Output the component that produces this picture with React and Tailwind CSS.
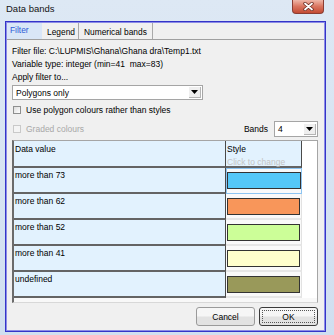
import React from "react";

function Arrow() {
  return (
    <svg width="7" height="4" viewBox="0 0 7 4">
      <path d="M0 0H7L3.5 4Z" fill="#000" />
    </svg>
  );
}

function Combo({ className, text }) {
  return (
    <div className={className}>
      <span className="flex-1 pl-[3px] text-[8.5px] leading-[10px] text-black">{text}</span>
      <div className="w-[12px] h-[11px] mr-[1px] bg-[#efefef] border-r border-b border-[#b5b5b5] flex items-center justify-center">
        <Arrow />
      </div>
    </div>
  );
}

const rows = [
  { label: "more than 73", color: "bg-[#55c8f8]", focus: true },
  { label: "more than 62", color: "bg-[#f8965a]" },
  { label: "more than 52", color: "bg-[#ccfe98]" },
  { label: "more than 41", color: "bg-[#ffffcc]" },
  { label: "undefined", color: "bg-[#99995a]" },
];

export default function App() {
  return (
    <div className="w-[334px] h-[335px] bg-linear-to-b from-[#dde8f4] to-[#d0dff0] flex flex-col font-['Liberation_Sans',Arial,sans-serif] text-black overflow-hidden">
      {/* title bar */}
      <div className="h-[21px] shrink-0 flex items-start justify-between">
        <div className="pl-[6px] pt-[3px] text-[9.5px] leading-[12px] text-[#141414]">Data bands</div>
        <div className="mr-[10px] w-[32px] h-[14px] rounded-b-[4px] border border-t-0 border-[#8a3d33] bg-linear-to-b from-[#eeb6a8] via-[#d9745f] to-[#c34a33] flex items-center justify-center">
          <svg width="11" height="9" viewBox="0 0 11 9">
            <path d="M2 1.5L9 7.5M9 1.5L2 7.5" stroke="#6b2b22" strokeWidth="3.4" strokeLinecap="round" />
            <path d="M2 1.5L9 7.5M9 1.5L2 7.5" stroke="#ffffff" strokeWidth="1.8" strokeLinecap="round" />
          </svg>
        </div>
      </div>

      {/* client area */}
      <div className="ml-[5px] mr-[8px] h-[311px] shrink-0 border border-[#3434c8]">
        <div className="h-full border border-[#8c8ce6] bg-[#f0f0f0] flex flex-col">
          {/* tabs */}
          <div className="h-[17px] shrink-0 flex border-b border-[#a0a0a0]">
            <div className="w-[35px] bg-[#d9e6f7] text-[#2c5bd6] text-[8.4px] leading-[10px] pl-[3px] pt-[2px]">Filter</div>
            <div className="w-[37px] border-r border-[#a9a9a9] text-[8.4px] leading-[10px] pl-[5px] pt-[4px]">Legend</div>
            <div className="w-[74px] border-r border-[#a9a9a9] text-[8.4px] leading-[10px] pl-[5px] pt-[4px]">Numerical bands</div>
          </div>

          {/* content */}
          <div className="flex flex-col pl-[5px] pr-[6px] pt-[5px] text-[8.5px]">
            <div className="h-[13px] leading-[13px]">Filter file: C:\LUPMIS\Ghana\Ghana dra\Temp1.txt</div>
            <div className="h-[13px] leading-[13px]">Variable type: integer (min=41&nbsp;&nbsp;max=83)</div>
            <div className="h-[13px] leading-[13px]">Apply filter to...</div>
            <Combo
              className="mt-[1px] w-[191px] h-[15px] bg-white border border-[#a5a5a5] flex items-center"
              text="Polygons only"
            />
            <div className="h-[19px] flex items-center pl-[1px] gap-[5px]">
              <div className="w-[8px] h-[8px] border border-[#8e8f8f] bg-linear-to-br from-[#dcdcdc] to-[#ffffff]" />
              <span className="leading-[10px]">Use polygon colours rather than styles</span>
            </div>
            <div className="mt-[2px] h-[16px] flex items-center justify-between">
              <div className="flex items-center pl-[1px] gap-[5px]">
                <div className="w-[8px] h-[8px] border border-[#c9c9c9] bg-[#f4f4f4]" />
                <span className="leading-[10px] text-[#a8a8a8]">Graded colours</span>
              </div>
              <div className="flex items-center gap-[6px]">
                <span className="leading-[10px]">Bands</span>
                <Combo
                  className="w-[44px] h-[16px] bg-white border border-[#a5a5a5] flex items-center"
                  text="4"
                />
              </div>
            </div>

            {/* grid */}
            <div className="mt-[3px] h-[163px] border-l-2 border-l-[#6b6b6b] border-t border-t-[#a5a5a5] border-r border-r-[#a5a5a5] border-b border-b-[#d8d8d8] bg-[#f8f8f8] flex flex-col">
              <div className="h-[27px] shrink-0 flex">
                <div className="w-[212px] bg-[#e2f2fe] border-r border-r-[#4a4a4a] border-b-2 border-b-[#646464] pl-[1px] pt-[3px] leading-[10px]">
                  Data value
                </div>
                <div className="w-[76px] bg-[#e2f2fe] border-r border-r-[#4a4a4a] border-b-2 border-b-[#646464] pl-[1px] pt-[3px] flex flex-col">
                  <span className="leading-[10px]">Style</span>
                  <span className="leading-[10px] mt-[3px] text-[#c4c4c4]">Click to change</span>
                </div>
                <div className="flex-1 bg-white" />
              </div>
              {rows.map((r) => (
                <div key={r.label} className="h-[26px] shrink-0 flex">
                  <div className="w-[212px] bg-[#e2f2fe] border-r border-r-[#4a4a4a] border-b-2 border-b-[#646464] pl-[1px] pt-[2px] leading-[10px]">
                    {r.label}
                  </div>
                  <div
                    className={
                      r.focus
                        ? "w-[76px] bg-[#f9f9f9] border border-[#8cc4f2] px-0 pt-[3px]"
                        : "w-[76px] bg-[#f9f9f9] border-r border-b-2 border-r-[#e2e2e2] border-b-[#e6e6e6] pl-[1px] pr-[1px] pt-[4px]"
                    }
                  >
                    <div className={"h-[17px] border border-[#333333] " + r.color} />
                  </div>
                  <div className="flex-1 bg-white" />
                </div>
              ))}
              <div className="flex-1" />
            </div>

            {/* buttons */}
            <div className="mt-[4px] h-[19px] flex justify-end gap-[4px]">
              <button className="w-[59px] h-[19px] rounded-[3px] border border-[#9a9a9a] bg-linear-to-b from-[#f6f6f6] from-45% to-[#e2e2e2] to-55% text-[8.5px] leading-[10px] text-black">
                Cancel
              </button>
              <button className="w-[59px] h-[19px] rounded-[3px] border border-[#3a3a3a] bg-linear-to-b from-[#f6f6f6] from-45% to-[#e2e2e2] to-55% p-[2px] text-[8.5px] leading-[10px] text-black">
                <div className="w-full h-full border border-dotted border-[#555] flex items-center justify-center">OK</div>
              </button>
            </div>
          </div>
        </div>
      </div>
    </div>
  );
}
